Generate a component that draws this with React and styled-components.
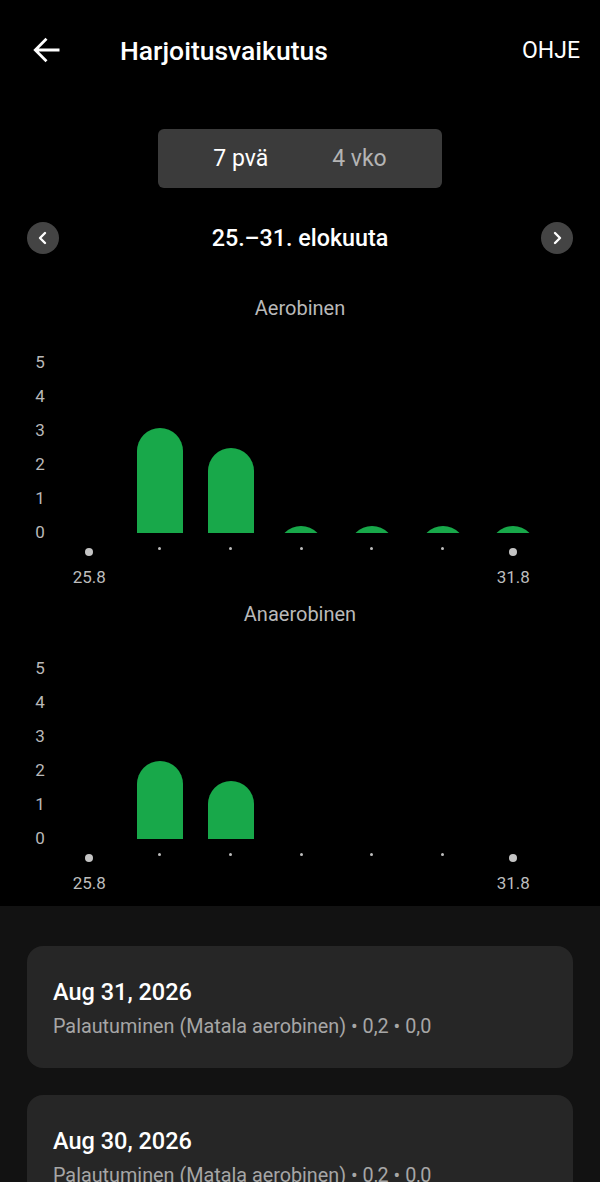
import React, { useState } from "react";
import styled, { createGlobalStyle } from "styled-components";

const GlobalStyle = createGlobalStyle`
  html, body {
    margin: 0;
    padding: 0;
    background: #000;
  }
  body {
    font-family: Roboto, "Noto Sans", "Liberation Sans", sans-serif;
    color: #fff;
  }
  * {
    box-sizing: border-box;
  }
`;

const Screen = styled.div`
  width: 600px;
  min-height: 1182px;
  background: #000;
  display: flex;
  flex-direction: column;
`;

const Header = styled.div`
  height: 100px;
  display: flex;
  align-items: center;
  padding: 0 20px 0 33px;
`;

const BackButton = styled.button`
  width: 28px;
  height: 26px;
  padding: 0;
  border: 0;
  background: none;
  display: flex;
  align-items: center;
  justify-content: center;
`;

const Title = styled.h1`
  margin: 0 0 0 59px;
  flex: 1;
  font-size: 26.5px;
  font-weight: 500;
`;

const HelpLink = styled.span`
  font-size: 23px;
  font-weight: 400;
`;

const Segmented = styled.div`
  align-self: center;
  margin-top: 29px;
  width: 284px;
  height: 59px;
  border-radius: 6px;
  background: #3b3b3b;
  display: flex;
  align-items: center;
  justify-content: center;
  gap: 64px;
`;

const Segment = styled.button`
  border: 0;
  background: none;
  font-family: inherit;
  font-size: 23px;
  color: ${(p) => (p.$active ? "#fff" : "#b4b4b4")};
  padding: 0;
`;

const DateNav = styled.div`
  margin-top: 34px;
  height: 32px;
  padding: 0 27px;
  display: flex;
  align-items: center;
  justify-content: space-between;
`;

const RoundButton = styled.button`
  width: 32px;
  height: 32px;
  border-radius: 50%;
  border: 0;
  padding: 0;
  background: #444;
  display: flex;
  align-items: center;
  justify-content: center;
`;

const RangeLabel = styled.span`
  font-size: 23.3px;
  font-weight: 500;
`;

const Charts = styled.div`
  margin-top: 42px;
  padding-bottom: 13px;
  display: flex;
  flex-direction: column;
`;

const ChartBlock = styled.section`
  display: flex;
  flex-direction: column;
  margin-bottom: ${(p) => (p.$last ? "0" : "15px")};
`;

const ChartTitle = styled.div`
  text-align: center;
  height: 24px;
  line-height: 24px;
  font-size: 20px;
  color: #b9b9b9;
`;

const Plot = styled.div`
  margin-top: 25px;
  padding-left: 26px;
  display: grid;
  grid-template-columns: 28px repeat(7, 70.67px);
`;

const Axis = styled.div`
  display: flex;
  flex-direction: column;
`;

const AxisLabel = styled.span`
  height: 34px;
  line-height: 34px;
  text-align: center;
  font-size: 17px;
  color: #b9b9b9;
`;

const DayColumn = styled.div`
  display: flex;
  flex-direction: column;
  align-items: center;
  padding-top: 18px;
`;

const BarSlot = styled.div`
  height: 170px;
  width: 46px;
  display: flex;
  align-items: flex-end;
`;

const BarClip = styled.div`
  width: 46px;
  overflow: hidden;
`;

const BarFill = styled.div`
  width: 46px;
  border-radius: 23px;
  background: #18a84a;
`;

const DotRow = styled.div`
  height: 34px;
  display: flex;
  justify-content: center;
`;

const Dot = styled.span`
  width: ${(p) => (p.$big ? "8px" : "3px")};
  height: ${(p) => (p.$big ? "8px" : "3px")};
  margin-top: ${(p) => (p.$big ? "15px" : "14px")};
  border-radius: 50%;
  background: ${(p) => (p.$big ? "#c4c4c4" : "#bdbdbd")};
`;

const DayLabel = styled.span`
  height: 20px;
  line-height: 20px;
  font-size: 17px;
  color: #bdbdbd;
  white-space: nowrap;
`;

const ListSection = styled.div`
  flex: 1;
  background: #121212;
  padding: 40px 27px 0;
  display: flex;
  flex-direction: column;
  gap: 27px;
`;

const Card = styled.div`
  background: #262626;
  border-radius: 16px;
  padding: 32px 26px 0;
  height: 122px;
  flex-shrink: 0;
`;

const CardDate = styled.div`
  font-size: 23.5px;
  line-height: 28px;
  font-weight: 500;
`;

const CardMeta = styled.div`
  margin-top: 8px;
  font-size: 19.8px;
  line-height: 26px;
  color: #a6a6a6;
`;

const UNIT = 34;

const days = ["25.8", "", "", "", "", "", "31.8"];

const charts = [
  { title: "Aerobinen", values: [0, 3.1, 2.5, 0.2, 0.2, 0.2, 0.2] },
  { title: "Anaerobinen", values: [0, 2.3, 1.7, 0, 0, 0, 0] },
];

const entries = [
  { date: "Aug 31, 2026", meta: "Palautuminen (Matala aerobinen) • 0,2 • 0,0" },
  { date: "Aug 30, 2026", meta: "Palautuminen (Matala aerobinen) • 0,2 • 0,0" },
];

const Bar = ({ value }) => {
  const h = Math.round(value * UNIT);
  if (!h) return null;
  return (
    <BarClip style={{ height: h }}>
      <BarFill style={{ height: h + 46 }} />
    </BarClip>
  );
};

const Chart = ({ title, values, last }) => (
  <ChartBlock $last={last}>
    <ChartTitle>{title}</ChartTitle>
    <Plot>
      <Axis>
        {[5, 4, 3, 2, 1, 0].map((n) => (
          <AxisLabel key={n}>{n}</AxisLabel>
        ))}
      </Axis>
      {values.map((v, i) => (
        <DayColumn key={i}>
          <BarSlot>
            <Bar value={v} />
          </BarSlot>
          <DotRow>
            <Dot $big={!!days[i]} />
          </DotRow>
          <DayLabel>{days[i]}</DayLabel>
        </DayColumn>
      ))}
    </Plot>
  </ChartBlock>
);

const Chevron = ({ dir }) => (
  <svg width="12" height="14" viewBox="0 0 12 14">
    <path
      d={dir === "left" ? "M8 2 L3 7 L8 12" : "M4 2 L9 7 L4 12"}
      fill="none"
      stroke="#fff"
      strokeWidth="2.4"
      strokeLinecap="round"
      strokeLinejoin="round"
    />
  </svg>
);

export default function App() {
  const [range, setRange] = useState("7");
  return (
    <Screen>
      <GlobalStyle />
      <Header>
        <BackButton aria-label="Takaisin">
          <svg width="28" height="26" viewBox="0 0 28 26">
            <path
              d="M26.5 13 H2.5 M13.5 1.8 L2.3 13 L13.5 24.2"
              fill="none"
              stroke="#fff"
              strokeWidth="2.8"
            />
          </svg>
        </BackButton>
        <Title>Harjoitusvaikutus</Title>
        <HelpLink>OHJE</HelpLink>
      </Header>

      <Segmented>
        <Segment $active={range === "7"} onClick={() => setRange("7")}>
          7 pvä
        </Segment>
        <Segment $active={range === "4"} onClick={() => setRange("4")}>
          4 vko
        </Segment>
      </Segmented>

      <DateNav>
        <RoundButton aria-label="Edellinen">
          <Chevron dir="left" />
        </RoundButton>
        <RangeLabel>25.–31. elokuuta</RangeLabel>
        <RoundButton aria-label="Seuraava">
          <Chevron dir="right" />
        </RoundButton>
      </DateNav>

      <Charts>
        {charts.map((c, i) => (
          <Chart key={c.title} {...c} last={i === charts.length - 1} />
        ))}
      </Charts>

      <ListSection>
        {entries.map((e) => (
          <Card key={e.date}>
            <CardDate>{e.date}</CardDate>
            <CardMeta>{e.meta}</CardMeta>
          </Card>
        ))}
      </ListSection>
    </Screen>
  );
}
